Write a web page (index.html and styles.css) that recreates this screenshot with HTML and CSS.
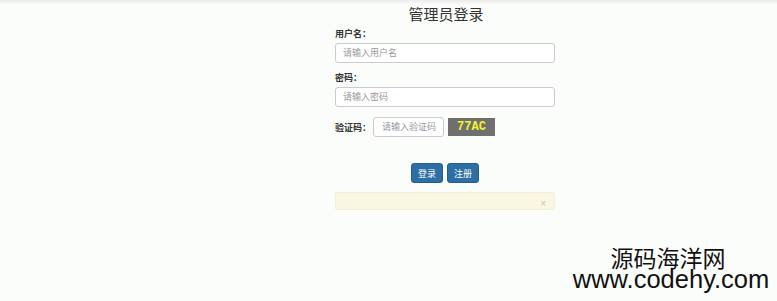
FILE: index.html
```html
<!DOCTYPE html>
<html lang="zh-CN">
<head>
    <meta charset="UTF-8">
    <title>管理员登录</title>
    <link rel="stylesheet" href="styles.css">
</head>
<body>
<div class="topbar"></div>

<div class="panel">
    <h1>管理员登录</h1>

    <label class="field-label">用户名：</label>
    <input class="field" type="text" placeholder="请输入用户名">

    <label class="field-label second">密码：</label>
    <input class="field" type="password" placeholder="请输入密码">

    <div class="captcha-row">
        <span class="captcha-label">验证码：</span>
        <input class="captcha-input" type="text" placeholder="请输入验证码">
        <span class="captcha-code">77AC</span>
    </div>

    <div class="actions">
        <button class="btn">登录</button>
        <button class="btn">注册</button>
    </div>

    <div class="alert">
        <span class="close">×</span>
    </div>
</div>

<div class="watermark">
    <div class="wm-cn">源码海洋网</div>
    <div class="wm-en">www.codehy.com</div>
</div>
</body>
</html>
```

FILE: styles.css
```css
body {
    font-family: "Liberation Sans", "Noto Sans CJK SC", sans-serif;
    background-color: #fbfdfb;
    margin: 0;
    padding: 0;
    color: #333;
}
.topbar { height: 5px; background: linear-gradient(#ececec, #fbfdfb); }
.panel { width: 220px; margin-left: 335px; }
h1 { margin: 0; font-size: 15px; line-height: 17px; font-weight: normal; text-align: center; color: #333; padding-left: 2px; font-family: "Noto Sans CJK SC", sans-serif; }
.field-label { display: block; margin-top: 6px; font-size: 9px; line-height: 12px; font-weight: bold; color: #333; }
.field-label.second { margin-top: 9px; }
.field { display: block; box-sizing: border-box; width: 220px; height: 20px; margin-top: 3px; padding: 0 7px; border: 1px solid #ccc; border-radius: 3px; background: #fff; font-size: 9px; font-family: inherit; color: #555; }
.field::placeholder, .captcha-input::placeholder { color: #999; }
.captcha-row { display: flex; align-items: center; margin-top: 10px; height: 20px; }
.captcha-label { width: 38px; font-size: 9px; font-weight: bold; color: #333; }
.captcha-input { box-sizing: border-box; width: 71px; height: 20px; padding: 0 6px 0 8px; border: 1px solid #ccc; border-radius: 3px; background: #fff; font-size: 9px; font-family: inherit; }
.captcha-code { margin-left: 4px; width: 47px; height: 18px; line-height: 18px; background-color: #6f6f6f; color: #f4f42a; font-family: "Liberation Mono", monospace; font-weight: bold; font-size: 12px; text-align: center; }
.actions { display: flex; justify-content: center; gap: 4px; margin-top: 26px; }
.btn { width: 32px; height: 20px; padding: 0; border: 1px solid #245d8c; border-radius: 3px; background-color: #2d6fa5; color: #fff; font-size: 9px; font-family: inherit; }
.alert { position: relative; box-sizing: border-box; height: 18px; margin-top: 9px; background-color: #f9f6e1; border: 1px solid #f3efd6; border-radius: 2px; }
.close { position: absolute; right: 8px; bottom: 0; font-size: 10px; line-height: 10px; color: #c9c5b5; }
.watermark { position: absolute; top: 247px; right: 4px; width: 204px; text-align: center; color: #111; }
.wm-cn { font-family: "Noto Sans CJK SC", sans-serif; font-size: 23px; line-height: 21px; padding-right: 6px; }
.wm-en { font-family: "Liberation Sans", sans-serif; font-size: 25.5px; line-height: 22px; }
```
